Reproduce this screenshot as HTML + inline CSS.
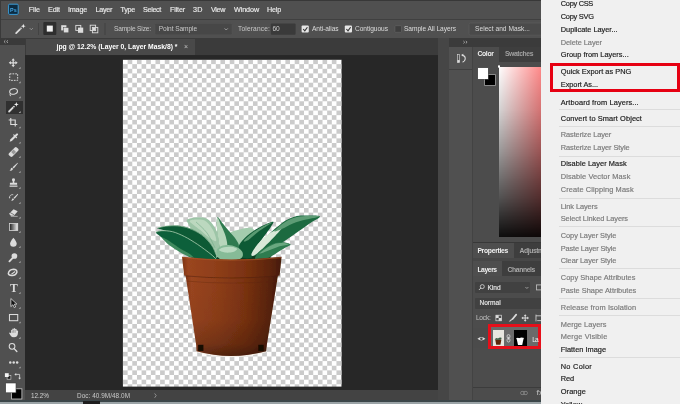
<!DOCTYPE html>
<html><head><meta charset="utf-8"><title>Photoshop</title>
<style>
html,body{margin:0;padding:0;background:#282828;}
#root{position:relative;width:680px;height:404px;overflow:hidden;background:#282828;font-family:"Liberation Sans",sans-serif;}
.t{position:absolute;white-space:nowrap;filter:blur(0.3px);}
.b{position:absolute;}
.sep{position:absolute;left:559px;width:121px;height:1px;background:#dcdcdc;}
svg{position:absolute;left:0;top:0;overflow:visible;}
.m{z-index:6}
.sep{z-index:6}
.menu{z-index:5}
.m{-webkit-text-stroke:0.18px currentColor}
.mb{-webkit-text-stroke:0.15px currentColor}
.ic{filter:blur(0.3px)}

</style></head>
<body>
<div id="root">
<!-- top bars -->
<div class="b" style="left:0;top:0;width:680px;height:19px;background:#505050"></div>
<div class="b" style="left:0;top:18.6px;width:680px;height:1px;background:#404040"></div>
<div class="b" style="left:0;top:19.6px;width:680px;height:18.7px;background:#505050"></div>
<div class="b" style="left:0;top:0;width:541px;height:0.8px;background:#383838"></div>
<div class="b" style="left:0;top:0;width:0.8px;height:404px;background:#3a3a3a"></div>
<!-- tab band -->
<div class="b" style="left:0;top:38.3px;width:680px;height:17.2px;background:#3b3b3b"></div>
<div class="b" style="left:25.6px;top:38.8px;width:169.4px;height:16.7px;background:#494949"></div>
<!-- canvas bg -->
<div class="b" style="left:24.5px;top:55.5px;width:413.2px;height:334.8px;background:#272727"></div>
<!-- status bar -->
<div class="b" style="left:24.5px;top:390.3px;width:413.2px;height:11px;background:#434343"></div>
<!-- left toolbar -->
<div class="b" style="left:0;top:38.3px;width:25.2px;height:365px;background:#505050"></div>
<div class="b" style="left:0;top:38.3px;width:25.2px;height:6.5px;background:#3a3a3a"></div>
<div class="b" style="left:6.2px;top:101.2px;width:16.4px;height:12.6px;background:#303030"></div>
<!-- right columns -->
<div class="b" style="left:437.7px;top:38.3px;width:11.5px;height:363px;background:#464646"></div>
<div class="b" style="left:449.2px;top:47px;width:23px;height:354px;background:#505050"></div>
<div class="b" style="left:449.2px;top:47px;width:23px;height:21.5px;background:#515151"></div>
<div class="b" style="left:449.2px;top:68.5px;width:23px;height:1px;background:#404040"></div>
<div class="b" style="left:471.5px;top:47px;width:1px;height:354px;background:#434343"></div>
<!-- color panel -->
<div class="b" style="left:472.5px;top:47px;width:70px;height:354px;background:#4c4c4c"></div>
<div class="b" style="left:499px;top:47px;width:43px;height:14.5px;background:#3e3e3e"></div>
<div class="b" style="left:484.5px;top:75px;width:10px;height:9.6px;background:#000;box-shadow:0 0 0 0.8px #9a9a9a"></div>
<div class="b" style="left:478.2px;top:68px;width:10.3px;height:10.6px;background:#fff;box-shadow:0 0 0 0.6px #555"></div>
<div class="b" style="left:499.2px;top:66.5px;width:84px;height:170.9px;background:linear-gradient(to bottom,rgba(0,0,0,0) 0%,rgba(0,0,0,0.17) 25%,rgba(0,0,0,0.40) 50%,rgba(0,0,0,0.68) 77%,rgba(0,0,0,0.95) 100%),linear-gradient(to right,#ffffff 0%,#ff1414 100%)"></div>
<div class="b" style="left:497.9px;top:65.2px;width:2.6px;height:2.6px;border-radius:50%;border:0.7px solid #fff;box-sizing:border-box;background:#ddd"></div>
<!-- properties tab row -->
<div class="b" style="left:472.5px;top:241.8px;width:70px;height:1.2px;background:#383838"></div>
<div class="b" style="left:472.5px;top:243px;width:70px;height:14.7px;background:#3e3e3e"></div>
<div class="b" style="left:472.5px;top:243px;width:41.5px;height:14.7px;background:#4e4e4e"></div>
<div class="b" style="left:472.5px;top:257.7px;width:70px;height:3.2px;background:#474747"></div>
<!-- layers tab row -->
<div class="b" style="left:472.5px;top:260.9px;width:70px;height:15.6px;background:#3e3e3e"></div>
<div class="b" style="left:472.5px;top:260.9px;width:29px;height:15.6px;background:#4e4e4e"></div>
<!-- kind / normal -->
<div class="b" style="left:474.8px;top:282.3px;width:55.6px;height:10.6px;background:#414141;border-radius:1px"></div>
<div class="b" style="left:474.8px;top:298.2px;width:70px;height:10.4px;background:#414141;border-radius:1px"></div>
<!-- layer row -->
<div class="b" style="left:472.5px;top:327.5px;width:70px;height:20px;background:#4b4b4b"></div>
<div class="b" style="left:488px;top:327px;width:54px;height:21px;background:#6a6a6a"></div>
<div class="b" style="left:492.5px;top:329.5px;width:11.5px;height:16.8px;background:#e8e6df"></div>
<div class="b" style="left:513.5px;top:329.5px;width:13px;height:16.8px;background:#000"></div>
<div class="b" style="left:487.6px;top:324.2px;width:53.9px;height:25.3px;border:3px solid #e60f1a;box-sizing:border-box"></div>
<!-- layers footer -->
<div class="b" style="left:472.5px;top:386.5px;width:70px;height:1px;background:#3c3c3c"></div>
<!-- bottom strip -->
<div class="b" style="left:0;top:400.2px;width:541px;height:4px;background:#3b4649"></div>
<div class="b" style="left:0;top:402.3px;width:541px;height:2px;background:#9aa3a6"></div>
<div class="b" style="left:83px;top:401px;width:17px;height:3px;background:#1e1e1e"></div>
<!-- context menu -->
<div class="b menu" style="left:541px;top:0;width:139px;height:404px;background:#f0f0f0"></div>
<div class="sep" style="top:108.9px"></div><div class="sep" style="top:125.9px"></div><div class="sep" style="top:155.8px"></div><div class="sep" style="top:197.5px"></div><div class="sep" style="top:226.2px"></div><div class="sep" style="top:268.4px"></div><div class="sep" style="top:298.4px"></div><div class="sep" style="top:315.1px"></div><div class="sep" style="top:356.7px"></div>
<div class="b" style="left:549.8px;top:62.8px;width:130.4px;height:29.4px;border:3.1px solid #e60012;box-sizing:border-box;z-index:7"></div>

<svg width="680" height="404" viewBox="0 0 680 404">
<defs>
<pattern id="chk" x="123" y="59.5" width="9.28" height="9.28" patternUnits="userSpaceOnUse">
<rect width="9.28" height="9.28" fill="#ffffff"/>
<rect x="4.64" y="0" width="4.64" height="4.64" fill="#cbcbcb"/>
<rect x="0" y="4.64" width="4.64" height="4.64" fill="#cbcbcb"/>
</pattern>
<linearGradient id="pot" x1="0" x2="1" y1="0" y2="0">
<stop offset="0" stop-color="#7c3312"/>
<stop offset="0.06" stop-color="#9a4520"/>
<stop offset="0.35" stop-color="#8e3e19"/>
<stop offset="0.65" stop-color="#7a3211"/>
<stop offset="0.9" stop-color="#5a240b"/>
<stop offset="1" stop-color="#451a06"/>
</linearGradient>
<linearGradient id="potv" x1="0" x2="0" y1="0" y2="1">
<stop offset="0" stop-color="#000" stop-opacity="0"/>
<stop offset="0.55" stop-color="#000" stop-opacity="0.05"/>
<stop offset="0.85" stop-color="#000" stop-opacity="0.2"/>
<stop offset="1" stop-color="#000" stop-opacity="0.42"/>
</linearGradient>
<filter id="soft" x="-5%" y="-5%" width="110%" height="110%"><feGaussianBlur stdDeviation="0.35"/></filter>
<filter id="soft2" x="-2%" y="-2%" width="104%" height="104%"><feGaussianBlur stdDeviation="0.6"/></filter>
</defs>
<rect x="122.9" y="59.8" width="218.7" height="326.8" fill="url(#chk)" filter="url(#soft2)"/>
<g id="plant" filter="url(#soft)">
<!-- leaves -->
<!--LEAVES-->
<path d="M196.0 252.0 C198.5 249.0 207.7 245.5 215.0 244.0 C222.3 242.5 232.2 242.3 240.0 243.0 C247.8 243.7 257.0 245.5 262.0 248.0 C267.0 250.5 273.7 255.7 270.0 258.0 C266.3 260.3 251.7 261.3 240.0 262.0 C228.3 262.7 207.3 263.7 200.0 262.0 C192.7 260.3 193.5 255.0 196.0 252.0Z" fill="#0b3d22" />
<path d="M229.4 234.1 C230.3 230.7 236.2 230.3 240.0 229.4 C243.7 228.4 249.3 227.1 251.9 228.3 C254.6 229.5 256.5 233.1 255.9 236.8 C255.2 240.4 251.5 247.8 247.9 250.0 C244.4 252.2 237.8 252.6 234.7 250.0 C231.6 247.4 228.5 237.6 229.4 234.1Z" fill="#a4ccae" />
<path d="M187.1 219.6 C188.4 218.5 193.0 217.6 196.3 217.4 C199.6 217.3 203.8 217.1 206.9 218.8 C210.0 220.4 212.8 224.1 214.8 227.5 C216.9 230.9 218.3 235.4 219.3 239.4 C220.4 243.4 221.5 248.2 220.9 251.3 C220.4 254.4 218.5 257.5 216.2 257.9 C213.8 258.4 209.8 256.6 206.9 254.0 C204.0 251.3 201.4 245.8 199.0 242.1 C196.5 238.3 194.1 234.5 192.4 231.5 C190.6 228.5 189.3 226.0 188.4 224.1 C187.5 222.1 185.7 220.7 187.1 219.6Z" fill="#9dc5a7" />
<path d="M189.7 220.9 C190.4 220.0 194.9 219.5 197.6 219.6 C200.4 219.6 203.6 219.6 206.1 221.4 C208.7 223.2 211.3 226.9 213.0 230.1 C214.7 233.4 216.7 239.4 216.2 240.7 C215.6 242.1 212.2 239.9 209.6 238.1 C206.9 236.3 202.9 232.4 200.3 230.1 C197.6 227.9 195.4 226.4 193.7 224.9 C191.9 223.3 189.0 221.8 189.7 220.9Z" fill="#bcd8bf" />
<path d="M196.3 222.2 C198.1 224.0 203.8 228.6 206.9 232.8 C210.0 237.0 213.5 244.9 214.8 247.4" fill="none" stroke="#6fa884" stroke-width="0.8" opacity="0.7" stroke-linecap="round"/>
<path d="M217.5 216.9 C218.5 216.5 220.8 221.1 222.8 223.5 C224.8 226.0 227.2 228.8 229.4 231.5 C231.6 234.1 234.5 236.8 236.0 239.4 C237.6 242.1 239.8 244.9 238.7 247.4 C237.6 249.8 232.4 253.5 229.4 254.0 C226.5 254.4 222.8 252.9 220.9 250.0 C219.1 247.1 219.0 240.7 218.3 236.8 C217.6 232.8 217.1 229.5 217.0 226.2 C216.8 222.9 216.5 217.4 217.5 216.9Z" fill="#2f7a50" />
<path d="M217.5 217.4 C218.2 217.2 219.7 222.1 220.9 224.9 C222.2 227.6 223.8 230.8 224.9 234.1 C226.0 237.4 227.2 241.6 227.3 244.7 C227.4 247.8 226.6 251.9 225.4 252.6 C224.3 253.4 221.6 252.1 220.4 249.5 C219.2 246.8 218.6 240.6 218.0 236.8 C217.4 232.9 216.8 229.4 216.7 226.2 C216.6 223.0 216.8 217.7 217.5 217.4Z" fill="#b7d6bb" />
<path d="M157.4 228.3 C157.9 227.6 162.5 226.4 165.9 225.9 C169.3 225.5 173.8 225.2 177.8 225.6 C181.8 226.0 185.7 226.8 189.7 228.3 C193.7 229.8 198.0 231.9 201.6 234.6 C205.2 237.4 209.0 241.3 211.4 244.7 C213.8 248.1 215.8 252.9 216.2 255.3 C216.5 257.7 215.7 260.1 213.5 259.3 C211.3 258.4 206.9 253.1 202.9 250.0 C199.0 246.9 194.3 243.5 189.7 240.7 C185.1 238.0 179.6 235.4 175.1 233.6 C170.7 231.8 166.2 231.0 163.2 230.1 C160.3 229.3 157.0 229.0 157.4 228.3Z" fill="#0f5a35" />
<path d="M157.9 228.0 C159.3 227.7 162.6 226.5 165.9 226.2 C169.2 225.8 173.8 225.5 177.8 225.9 C181.8 226.3 185.7 227.1 189.7 228.6 C193.7 230.1 198.0 232.2 201.6 234.9 C205.2 237.6 209.0 241.7 211.4 245.0 C213.8 248.3 215.4 253.1 216.2 254.8" fill="none" stroke="#9fc7a6" stroke-width="0.7" opacity="0.9" stroke-linecap="round"/>
<path d="M155.8 232.3 C156.1 231.3 159.1 230.5 161.9 230.4 C164.7 230.3 168.7 230.5 172.5 231.5 C176.2 232.4 180.2 234.1 184.4 236.2 C188.6 238.4 193.2 241.2 197.6 244.2 C202.1 247.1 207.8 251.5 210.9 254.0 C214.0 256.5 219.3 258.6 216.2 259.3 C213.1 259.9 197.4 258.8 192.4 257.9 C187.3 257.1 188.4 255.5 185.7 254.0 C183.1 252.4 179.6 250.7 176.5 248.7 C173.4 246.7 169.9 244.1 167.2 242.1 C164.5 240.0 162.0 237.9 160.1 236.2 C158.2 234.6 155.5 233.2 155.8 232.3Z" fill="#10603a" />
<path d="M161.9 237.3 C162.4 237.0 166.8 239.6 169.9 241.5 C172.9 243.4 177.1 246.6 180.4 248.7 C183.7 250.7 187.5 252.4 189.7 254.0 C191.9 255.5 194.3 257.7 193.7 257.9 C193.0 258.2 188.6 256.6 185.7 255.3 C182.9 254.0 179.6 252.0 176.5 250.0 C173.4 248.0 169.6 245.5 167.2 243.4 C164.8 241.3 161.5 237.6 161.9 237.3Z" fill="#3f8a5e" />
<path d="M156.4 232.0 C157.3 231.8 159.2 230.7 161.9 230.7 C164.6 230.6 168.7 230.8 172.5 231.7 C176.2 232.7 180.2 234.4 184.4 236.5 C188.6 238.6 193.2 241.5 197.6 244.4 C202.1 247.4 207.9 251.9 210.9 254.2 C213.9 256.6 214.8 258.0 215.6 258.7" fill="none" stroke="#b5d6b9" stroke-width="0.8" opacity="0.95" stroke-linecap="round"/>
<path d="M273.3 221.8 C272.5 221.1 268.1 223.2 264.7 224.8 C261.3 226.4 256.5 228.9 252.8 231.5 C249.1 234.1 244.9 237.6 242.4 240.4 C240.0 243.2 238.5 245.3 238.3 248.1 C238.0 250.9 238.8 255.4 240.9 257.0 C243.1 258.6 249.1 258.9 251.3 257.8 C253.6 256.6 252.6 252.9 254.3 249.9 C256.0 246.8 259.2 243.0 261.7 239.5 C264.3 236.0 267.5 232.0 269.5 229.1 C271.4 226.1 274.1 222.5 273.3 221.8Z" fill="#115a36" />
<path d="M272.1 222.6 C271.9 222.4 267.8 223.8 264.7 225.4 C261.6 227.0 257.0 229.5 253.6 232.1 C250.1 234.6 244.8 239.4 243.9 240.7 C243.0 242.0 246.1 241.3 248.4 239.9 C250.6 238.6 254.3 234.7 257.3 232.5 C260.2 230.3 263.7 228.2 266.2 226.6 C268.7 224.9 272.4 222.8 272.1 222.6Z" fill="#5a9a72" />
<path d="M319.9 216.4 C319.5 215.3 312.7 215.6 308.8 215.6 C305.0 215.5 300.4 215.5 296.9 216.1 C293.4 216.8 290.5 218.1 287.6 219.6 C284.8 221.0 282.6 222.6 279.7 224.9 C276.8 227.1 273.5 229.7 270.4 232.8 C267.3 235.9 264.3 239.6 261.2 243.4 C258.1 247.1 251.9 253.5 251.9 255.3 C251.9 257.1 257.9 255.1 261.2 254.0 C264.5 252.9 267.8 250.9 271.8 248.7 C275.7 246.5 280.6 243.6 285.0 240.7 C289.4 237.9 293.8 234.6 298.2 231.5 C302.6 228.4 307.8 224.7 311.5 222.2 C315.1 219.7 320.4 217.5 319.9 216.4Z" fill="#1b6a40" />
<path d="M276.5 229.4 C279.2 228.0 282.7 226.3 282.3 227.5 C282.0 228.7 277.5 233.5 274.4 236.8 C271.3 240.1 267.1 244.3 263.8 247.4 C260.5 250.4 256.6 254.1 254.6 255.3 C252.5 256.4 250.9 256.0 251.4 254.2 C251.8 252.5 254.7 247.8 257.2 244.7 C259.7 241.6 263.2 238.0 266.5 235.4 C269.7 232.9 273.9 230.7 276.5 229.4Z" fill="#d9e8d8" />
<path d="M319.4 216.4 C319.8 215.8 312.6 216.0 308.8 216.1 C305.1 216.2 300.4 216.2 296.9 216.9 C293.4 217.6 290.4 218.9 287.6 220.4 C284.9 221.8 282.4 223.8 280.2 225.6 C278.0 227.5 274.1 230.9 274.4 231.5 C274.8 232.0 279.3 230.1 282.3 228.8 C285.4 227.5 289.0 225.1 292.9 223.5 C296.9 222.0 301.8 220.7 306.2 219.6 C310.6 218.4 319.0 217.0 319.4 216.4Z" fill="#5d9c74" />
<path d="M290.5 244.4 C290.1 243.5 285.3 242.5 282.5 242.3 C279.7 242.2 276.6 242.6 273.6 243.5 C270.6 244.4 267.4 246.2 264.7 248.0 C262.0 249.7 258.8 252.0 257.3 253.9 C255.8 255.8 254.1 258.5 255.8 259.2 C257.5 260.0 264.2 259.3 267.7 258.2 C271.1 257.1 273.6 254.6 276.6 252.9 C279.6 251.1 283.2 248.9 285.5 247.5 C287.8 246.1 291.0 245.3 290.5 244.4Z" fill="#2f7b50" />
<path d="M288.5 244.4 C289.0 243.8 285.0 243.1 282.5 243.1 C280.1 243.0 276.8 243.3 273.9 244.2 C271.1 245.2 267.8 247.1 265.4 248.7 C263.0 250.3 258.9 253.5 259.5 253.7 C260.1 254.0 265.8 251.6 269.2 250.3 C272.5 249.1 276.3 247.3 279.6 246.3 C282.8 245.3 288.0 244.9 288.5 244.4Z" fill="#6aa880" />
<path d="M216.8 250.0 C217.5 248.3 219.3 246.8 221.5 246.0 C223.7 245.2 227.2 244.9 230.0 245.2 C232.8 245.5 235.9 246.6 238.0 247.8 C240.1 249.0 242.0 250.8 242.6 252.5 C243.2 254.2 243.1 256.7 241.5 258.0 C239.9 259.3 236.2 260.2 233.0 260.5 C229.8 260.8 224.6 260.6 222.0 259.8 C219.4 259.1 218.1 257.6 217.2 256.0 C216.3 254.4 216.1 251.7 216.8 250.0Z" fill="#86bb97" />
<path d="M219.0 250.0 C218.8 249.1 222.0 247.7 224.0 247.2 C226.0 246.7 228.8 246.5 231.0 246.8 C233.2 247.1 236.7 248.1 237.0 249.0 C237.3 249.9 235.0 251.4 233.0 252.0 C231.0 252.6 227.3 252.8 225.0 252.5 C222.7 252.2 219.2 250.9 219.0 250.0Z" fill="#b9d9c0" />
<!--/LEAVES-->
<!-- pot body -->
<path d="M196.6 351.6 Q231 361.4 266.2 351.6" stroke="#f6f1ea" stroke-width="1.6" fill="none" opacity=".9"/>
<path d="M185.5 275 L278 275 L266.8 345 L266.2 351.2 Q231 360.6 196.6 351.2 L196.2 345 Z" fill="url(#pot)"/>
<path d="M185.5 275 L278 275 L266.8 345 L266.2 351.2 Q231 360.6 196.6 351.2 L196.2 345 Z" fill="url(#potv)"/>
<!-- rim -->
<path d="M182 256.8 Q231 262 281.6 256.8 L279.6 275.6 Q231 280 184.2 275.6 Z" fill="url(#pot)"/>
<path d="M182.3 257.6 Q231 262.8 281.3 257.6" stroke="#b05c30" stroke-width="1" fill="none" opacity=".6"/>
<path d="M184.2 275.8 Q231 280.2 279.6 275.8" stroke="#4e1e07" stroke-width="1" fill="none" opacity=".5"/>
<path d="M185 281 Q231 285.2 278.6 281" stroke="#5a2409" stroke-width="0.8" fill="none" opacity=".4"/>
<!-- feet -->
<rect x="198.2" y="344.8" width="5.2" height="6.2" fill="#150803"/>
<rect x="258.4" y="344.8" width="5.2" height="6.2" fill="#150803"/>
</g>
</svg>
<svg class="ic" width="680" height="404" viewBox="0 0 680 404">
<rect x="8.6" y="4.2" width="9.6" height="10.2" rx="1" fill="#0c2c42" stroke="#3a9bd6" stroke-width="1"/>
<text x="10.1" y="11.6" font-family="Liberation Sans, sans-serif" font-size="5.4" font-weight="700" fill="#45a6e4">Ps</text>
<g transform="translate(13.2,62.8) scale(0.86)" ><path d="M0 -5.2 L2 -2.6 L0.7 -2.6 L0.7 -0.7 L2.6 -0.7 L2.6 -2 L5.2 0 L2.6 2 L2.6 0.7 L0.7 0.7 L0.7 2.6 L2 2.6 L0 5.2 L-2 2.6 L-0.7 2.6 L-0.7 0.7 L-2.6 0.7 L-2.6 2 L-5.2 0 L-2.6 -2 L-2.6 -0.7 L-0.7 -0.7 L-0.7 -2.6 L-2 -2.6 Z" fill="#dcdcdc"/></g>
<path d="M20.6 66.9 l0 1.9 l-1.9 0 z" fill="#b0b0b0"/>
<g transform="translate(13.7,77.1) scale(0.86)" ><rect x="-4.6" y="-3.8" width="9.2" height="7.6" fill="none" stroke="#dcdcdc" stroke-width="1.1" stroke-dasharray="2 1.2"/></g>
<path d="M20.6 81.30000000000001 l0 1.9 l-1.9 0 z" fill="#b0b0b0"/>
<g transform="translate(13.4,92.2) scale(0.86)" ><ellipse cx="0.4" cy="-0.8" rx="4.6" ry="3.2" fill="none" stroke="#dcdcdc" stroke-width="1.2" transform="rotate(-12)"/><path d="M-3.4 1.2 Q-4.6 3 -3.2 4.6" fill="none" stroke="#dcdcdc" stroke-width="1.1"/></g>
<path d="M20.6 96.30000000000001 l0 1.9 l-1.9 0 z" fill="#b0b0b0"/>
<g transform="translate(13.4,107.2) scale(0.86)" ><path d="M-5 5 L0.6 -0.6" stroke="#dcdcdc" stroke-width="2.1" stroke-linecap="round"/><path d="M-0.9 -0.9 L0.9 0.9" stroke="#303030" stroke-width="0.7"/><path d="M3.4 -6 L4.1 -3.9 L6.2 -3.2 L4.1 -2.5 L3.4 -0.4 L2.7 -2.5 L0.6 -3.2 L2.7 -3.9 Z" fill="#f4f4f4"/></g>
<path d="M20.6 111.10000000000001 l0 1.9 l-1.9 0 z" fill="#b0b0b0"/>
<g transform="translate(13,122.3) scale(0.86)" ><path d="M-2.6 -5 L-2.6 2.6 L5 2.6 M-5 -2.6 L2.6 -2.6 L2.6 5" fill="none" stroke="#dcdcdc" stroke-width="1.3"/></g>
<path d="M20.6 126.4 l0 1.9 l-1.9 0 z" fill="#b0b0b0"/>
<g transform="translate(13.6,137.8) scale(0.86)" ><path d="M-4.6 4.6 L-3.8 2 L0.6 -2.4 L2.4 -0.6 L-2 3.8 Z" fill="#dcdcdc"/><path d="M0.2 -3.4 L3.4 -0.2" stroke="#dcdcdc" stroke-width="1.4" stroke-linecap="round"/><path d="M1.8 -1.8 L4 -4" stroke="#dcdcdc" stroke-width="2.4" stroke-linecap="round"/></g>
<path d="M20.6 141.70000000000002 l0 1.9 l-1.9 0 z" fill="#b0b0b0"/>
<g transform="translate(13.6,152) scale(0.86)" ><rect x="-6.4" y="-2.8" width="12.8" height="5.6" rx="1.6" fill="#dcdcdc" transform="rotate(-45)"/><rect x="-2" y="-2" width="4" height="4" fill="#555" transform="rotate(-45)" opacity=".5"/></g>
<path d="M20.6 155.9 l0 1.9 l-1.9 0 z" fill="#b0b0b0"/>
<g transform="translate(13.6,167) scale(0.86)" ><path d="M4.6 -4.8 L5 -4.4 L0.2 1.6 L-1.2 0.2 Z" fill="#dcdcdc"/><path d="M-1.8 0.9 L-0.5 2.2 Q-1.6 4.6 -4.8 4.6 Q-3.2 3.2 -3.4 2.2 Q-3.2 1 -1.8 0.9Z" fill="#dcdcdc"/></g>
<path d="M20.6 170.9 l0 1.9 l-1.9 0 z" fill="#b0b0b0"/>
<g transform="translate(13.5,182.8) scale(0.86)" ><path d="M-1.6 -4.8 Q0 -5.6 1.6 -4.8 Q2.2 -3.2 0.9 -1.6 L0.9 0 L4.2 0 L4.2 2.2 L-4.2 2.2 L-4.2 0 L-0.9 0 L-0.9 -1.6 Q-2.2 -3.2 -1.6 -4.8Z" fill="#dcdcdc"/><rect x="-4.6" y="3.2" width="9.2" height="1.4" fill="#dcdcdc"/></g>
<path d="M20.6 186.9 l0 1.9 l-1.9 0 z" fill="#b0b0b0"/>
<g transform="translate(13.6,198) scale(0.86)" ><path d="M4.8 -4.8 L5.2 -4.2 L1.2 0.8 L0 -0.4 Z" fill="#dcdcdc"/><path d="M-0.6 0.2 L0.6 1.4 Q-0.4 3.4 -3 3.4 Q-1.8 2.4 -2 1.6 Q-1.8 0.4 -0.6 0.2Z" fill="#dcdcdc"/><path d="M-4.8 -0.6 A3.4 3.4 0 0 1 -0.4 -3.8" fill="none" stroke="#dcdcdc" stroke-width="0.9"/><path d="M-5.6 -1.2 L-3.8 -0.8 L-4.4 0.8Z" fill="#dcdcdc"/></g>
<path d="M20.6 201.9 l0 1.9 l-1.9 0 z" fill="#b0b0b0"/>
<g transform="translate(13.4,212.6) scale(0.86)" ><path d="M-5 1.2 L0.2 -4 L5 -1.6 L0.6 3.6 L-3 3.6 Z" fill="#dcdcdc"/><path d="M-3.8 0 L1 2.6" stroke="#4d4d4d" stroke-width="0.8"/><path d="M-3 4.4 L5 4.4" stroke="#dcdcdc" stroke-width="0.7"/></g>
<path d="M20.6 216.70000000000002 l0 1.9 l-1.9 0 z" fill="#b0b0b0"/>
<defs><linearGradient id="gr" x1="0" x2="1"><stop offset="0" stop-color="#1c1c1c"/><stop offset="1" stop-color="#f4f4f4"/></linearGradient></defs>
<g transform="translate(13.6,227) scale(0.86)" ><rect x="-4.8" y="-4" width="9.6" height="8" fill="url(#gr)" stroke="#dcdcdc" stroke-width="0.9"/></g>
<path d="M20.6 230.9 l0 1.9 l-1.9 0 z" fill="#b0b0b0"/>
<g transform="translate(13.4,242) scale(0.86)" ><path d="M0 -5 Q3.8 -0.4 3.8 1.6 A3.8 3.8 0 0 1 -3.8 1.6 Q-3.8 -0.4 0 -5Z" fill="#dcdcdc"/></g>
<path d="M20.6 245.9 l0 1.9 l-1.9 0 z" fill="#b0b0b0"/>
<g transform="translate(13.2,257.4) scale(0.86)" ><circle cx="1.4" cy="-1.6" r="3.3" fill="#dcdcdc"/><path d="M-0.8 0.8 L-4.4 4.6" stroke="#dcdcdc" stroke-width="2.1" stroke-linecap="round"/></g>
<path d="M20.6 260.9 l0 1.9 l-1.9 0 z" fill="#b0b0b0"/>
<g transform="translate(12.6,272.6) scale(0.86)" ><path d="M-5 1 Q-4 -3.4 1 -3.8 Q5.4 -3.6 5 -0.4 Q4 3 -0.6 3.4 Q-4.6 3.6 -5 1Z" fill="none" stroke="#dcdcdc" stroke-width="1.7"/><path d="M-2 1.6 L2.6 -1.8 L3.4 -0.6 L-0.8 2.2Z" fill="#dcdcdc"/></g>
<path d="M20.6 276.9 l0 1.9 l-1.9 0 z" fill="#b0b0b0"/>
<text x="10.1" y="291.8" font-family="Liberation Serif, serif" font-size="11.6" font-weight="700" fill="#dcdcdc">T</text>
<path d="M20.6 291.9 l0 1.9 l-1.9 0 z" fill="#b0b0b0"/>
<g transform="translate(13.6,303) scale(0.86)" ><path d="M-3.2 -5.2 L-3.2 4.2 L-0.8 2 L0.8 5.4 L2.4 4.6 L0.9 1.4 L3.8 1.2 Z" fill="#141414" stroke="#e2e2e2" stroke-width="0.9" stroke-linejoin="round"/></g>
<path d="M20.6 306.9 l0 1.9 l-1.9 0 z" fill="#b0b0b0"/>
<g transform="translate(13.6,317.6) scale(0.86)" ><rect x="-4.8" y="-3.6" width="9.6" height="7.2" fill="none" stroke="#dcdcdc" stroke-width="1.2"/></g>
<path d="M20.6 321.4 l0 1.9 l-1.9 0 z" fill="#b0b0b0"/>
<g transform="translate(14,332.8) scale(0.86)" ><path d="M-3.4 0.6 L-3.4 -3 Q-2.7 -4.2 -2 -3 L-2 -4.4 Q-1.2 -5.8 -0.4 -4.4 L-0.4 -4.8 Q0.5 -6.2 1.3 -4.8 L1.3 -4 Q2.2 -5.2 3 -4 L3.2 -2.4 Q4.4 -3.4 4.8 -2 L4.4 1.8 Q3.8 5.2 0 5.2 Q-2.8 5.2 -4 3 L-5.8 0.2 Q-4.8 -1.2 -3.4 0.6Z" fill="#dcdcdc"/><path d="M-2 -2.6 L-2 0 M-0.4 -3.6 L-0.4 0 M1.3 -3.4 L1.3 0" stroke="#505050" stroke-width="0.5"/></g>
<path d="M20.6 336.9 l0 1.9 l-1.9 0 z" fill="#b0b0b0"/>
<g transform="translate(12.9,347.4) scale(0.86)" ><circle cx="-1" cy="-1.2" r="3.3" fill="none" stroke="#dcdcdc" stroke-width="1.2"/><path d="M1.4 1.4 L4.6 4.8" stroke="#dcdcdc" stroke-width="1.6" stroke-linecap="round"/></g>
<g transform="translate(13.7,362.6) scale(0.86)" ><circle cx="-4" cy="0" r="1.45" fill="#dcdcdc"/><circle cx="0" cy="0" r="1.45" fill="#dcdcdc"/><circle cx="4" cy="0" r="1.45" fill="#dcdcdc"/></g>
<path d="M20.6 366.4 l0 1.9 l-1.9 0 z" fill="#b0b0b0"/>
<g transform="translate(7.7,376) scale(1.0)" ><rect x="-0.6" y="-0.6" width="3.8" height="3.8" fill="#222" stroke="#dcdcdc" stroke-width="0.6"/><rect x="-2.8" y="-2.8" width="3.8" height="3.8" fill="#f4f4f4"/></g>
<g transform="translate(18,376) scale(1.0)" ><path d="M-2.6 -1.6 L1.6 -1.6 L1.6 2.6" fill="none" stroke="#dcdcdc" stroke-width="0.8"/><path d="M-3.6 -1.6 L-1.8 -3 L-1.8 -0.2Z M1.6 3.6 L0.2 1.8 L3 1.8Z" fill="#dcdcdc"/></g>
<rect x="11.6" y="388.8" width="10.3" height="10.2" fill="#000" stroke="#c8c8c8" stroke-width="0.8"/>
<rect x="5.7" y="383" width="10.3" height="9.8" fill="#fff" stroke="#3a3a3a" stroke-width="0.6"/>
<path d="M5.4 40.3 l-1.4 1.3 l1.4 1.3 M8 40.3 l-1.4 1.3 l1.4 1.3" fill="none" stroke="#c8c8c8" stroke-width="0.7"/>
<path d="M463.4 41 l1.3 1.2 l-1.3 1.2 M465.8 41 l1.3 1.2 l-1.3 1.2" fill="none" stroke="#c8c8c8" stroke-width="0.7"/>
<g transform="translate(20.4,28.9) scale(0.85)" ><path d="M-5 5 L0.6 -0.6" stroke="#dcdcdc" stroke-width="2.1" stroke-linecap="round"/><path d="M-0.9 -0.9 L0.9 0.9" stroke="#4b4b4b" stroke-width="0.7"/><path d="M3.4 -6 L4.1 -3.9 L6.2 -3.2 L4.1 -2.5 L3.4 -0.4 L2.7 -2.5 L0.6 -3.2 L2.7 -3.9 Z" fill="#f4f4f4"/></g>
<path d="M29.8 28.2 l1.5 1.5 l1.5 -1.5" fill="none" stroke="#a8a8a8" stroke-width="0.8"/>
<rect x="38.2" y="23" width="0.8" height="12" fill="#404040"/>
<rect x="43.3" y="22.1" width="13" height="12.9" rx="1" fill="#2e2e2e"/>
<rect x="46.8" y="25.6" width="6" height="6" fill="#f0f0f0"/>
<g transform="translate(65,29) scale(1.0)" ><rect x="-3.8" y="-3.8" width="5.2" height="5.2" fill="#dcdcdc"/><rect x="-1.4" y="-1.4" width="5.2" height="5.2" fill="#dcdcdc" stroke="#4b4b4b" stroke-width="0.5"/></g>
<g transform="translate(79.4,29) scale(1.0)" ><rect x="-3.6" y="-3.6" width="5" height="5" fill="none" stroke="#dcdcdc" stroke-width="0.9"/><rect x="-1.4" y="-1.4" width="5.2" height="5.2" fill="#dcdcdc"/></g>
<g transform="translate(94,29) scale(1.0)" ><rect x="-3.8" y="-3.8" width="5.4" height="5.4" fill="none" stroke="#dcdcdc" stroke-width="0.9"/><rect x="-1.6" y="-1.6" width="5.4" height="5.4" fill="none" stroke="#dcdcdc" stroke-width="0.9"/><rect x="-1.2" y="-1.2" width="2.4" height="2.4" fill="#dcdcdc"/></g>
<rect x="104.6" y="23" width="0.8" height="12" fill="#3c3c3c"/>
<rect x="155" y="23.4" width="77" height="11.4" rx="1" fill="#474747" stroke="#585858" stroke-width="0.4"/>
<path d="M224.6 28.4 l1.6 1.6 l1.6 -1.6" fill="none" stroke="#b0b0b0" stroke-width="0.8"/>
<rect x="270.8" y="23.4" width="24.8" height="11.4" rx="1" fill="#3a3a3a"/>
<rect x="301.6" y="25.4" width="7.2" height="7.2" rx="1" fill="#e6e6e6"/><path d="M303.20000000000005 29.0 l1.6 1.8 l2.6 -3.6" fill="none" stroke="#333" stroke-width="1.1"/>
<rect x="344.8" y="25.4" width="7.2" height="7.2" rx="1" fill="#e6e6e6"/><path d="M346.40000000000003 29.0 l1.6 1.8 l2.6 -3.6" fill="none" stroke="#333" stroke-width="1.1"/>
<rect x="394.90000000000003" y="25.7" width="6.6" height="6.6" rx="0.8" fill="#3e3e3e" stroke="#666" stroke-width="0.6"/>
<rect x="469" y="23" width="80" height="12.2" rx="1.5" fill="#4a4a4a" stroke="#5e5e5e" stroke-width="0.6"/>
<g transform="translate(461,58.5) scale(1.0)" ><rect x="-3.6" y="-4" width="2.2" height="8" fill="none" stroke="#dcdcdc" stroke-width="0.6"/><rect x="-3.6" y="1.6" width="2.2" height="2.4" fill="#dcdcdc"/><path d="M1.2 -3.4 Q4.6 -2.6 4.2 0.6 Q3.8 3 1.6 3.6" fill="none" stroke="#dcdcdc" stroke-width="1.1"/><path d="M0 -3.6 L2.4 -4.8 L2.2 -2Z" fill="#dcdcdc"/></g>
<g transform="translate(481.5,287.4) scale(1.0)" ><circle cx="0.8" cy="-0.8" r="2" fill="none" stroke="#dcdcdc" stroke-width="0.8"/><path d="M-0.6 0.6 L-2.6 2.6" stroke="#dcdcdc" stroke-width="0.9"/></g>
<path d="M525.4 287 l1.5 1.5 l1.5 -1.5" fill="none" stroke="#b0b0b0" stroke-width="0.8"/>
<g transform="translate(539.5,287.5) scale(1.0)" ><rect x="-3" y="-2.6" width="6" height="5" fill="none" stroke="#b8b8b8" stroke-width="0.9"/></g>
<g transform="translate(498.7,318) scale(1.0)" ><rect x="-2.8" y="-2.8" width="5.6" height="5.6" fill="none" stroke="#dcdcdc" stroke-width="0.7"/><rect x="-2.8" y="-2.8" width="2.8" height="2.8" fill="#dcdcdc"/><rect x="0" y="0" width="2.8" height="2.8" fill="#dcdcdc"/></g>
<g transform="translate(512.8,318.2) scale(1.0)" ><path d="M3.4 -3.6 L-0.2 0.8" stroke="#dcdcdc" stroke-width="1.7" stroke-linecap="round"/><path d="M-0.6 0.6 Q-1.2 3 -3.4 3.2 Q-2.2 1.2 -0.6 0.6Z" fill="#dcdcdc" stroke="#dcdcdc" stroke-width="0.5"/></g>
<g transform="translate(525.2,318) scale(1.0)" ><path d="M0 -3.8 L1.4 -2 L0.5 -2 L0.5 -0.5 L2 -0.5 L2 -1.4 L3.8 0 L2 1.4 L2 0.5 L0.5 0.5 L0.5 2 L1.4 2 L0 3.8 L-1.4 2 L-0.5 2 L-0.5 0.5 L-2 0.5 L-2 1.4 L-3.8 0 L-2 -1.4 L-2 -0.5 L-0.5 -0.5 L-0.5 -2 L-1.4 -2 Z" fill="#dcdcdc"/></g>
<g transform="translate(538.6,318) scale(1.0)" ><path d="M-2.6 -2.2 L3 -2.2 L3 2.6 L-1.4 2.6 M-2.6 -3.4 L-2.6 3.4" fill="none" stroke="#dcdcdc" stroke-width="0.8"/></g>
<g transform="translate(481.4,338.8) scale(1.0)" ><path d="M-4 0 Q0 -3.6 4 0 Q0 3.6 -4 0Z" fill="#dcdcdc"/><circle cx="0" cy="0" r="1.3" fill="#4b4b4b"/></g>
<g transform="translate(508.5,338.2) scale(1.0)" ><rect x="-1.4" y="-3.6" width="2.8" height="3.6" rx="1.3" fill="none" stroke="#e8e8e8" stroke-width="0.7"/><rect x="-1.4" y="0.2" width="2.8" height="3.6" rx="1.3" fill="none" stroke="#e8e8e8" stroke-width="0.7"/><path d="M0 -1.4 L0 1.6" stroke="#e8e8e8" stroke-width="0.7"/></g>
<path d="M495.2 339.4 L501.4 339.4 L500.4 344.8 L496.2 344.8 Z" fill="#5e260c"/><path d="M494.6 339.6 Q496 337 498 338.4 Q500 336.8 502 338 Q501 338.8 500.6 339.8 L496 339.8 Q495.4 339.2 494.6 339.6Z" fill="#3a5e44"/>
<path d="M516.6 338.6 L523.6 338.6 L522.2 345 L518 345 Z" fill="#fff"/><path d="M516 339 Q517.4 337 519.2 338.2 Q521.4 336.8 524.2 338 Q523.2 338.6 522.8 339.4 L517.6 339.4 Q516.8 338.8 516 339Z" fill="#fff"/>
<g transform="translate(524,393) scale(1.0)" ><rect x="-3.4" y="-1.6" width="3.8" height="3.2" rx="1.4" fill="none" stroke="#8a8a8a" stroke-width="0.8"/><rect x="-0.4" y="-1.6" width="3.8" height="3.2" rx="1.4" fill="none" stroke="#8a8a8a" stroke-width="0.8"/></g>
<path d="M154.6 393.4 l1.6 2.2 l-1.6 2.2" fill="none" stroke="#a0a0a0" stroke-width="0.8"/>
</svg>

<span id="t0" class="t mb" style="left:28.75px;top:3.50px;font-size:7.2px;color:#ebebeb;font-weight:400;line-height:12px;letter-spacing:-0.086px;">File</span>
<span id="t1" class="t mb" style="left:48px;top:3.50px;font-size:7.2px;color:#ebebeb;font-weight:400;line-height:12px;letter-spacing:-0.098px;">Edit</span>
<span id="t2" class="t mb" style="left:68px;top:3.50px;font-size:7.2px;color:#ebebeb;font-weight:400;line-height:12px;letter-spacing:-0.197px;">Image</span>
<span id="t3" class="t mb" style="left:95.5px;top:3.50px;font-size:7.2px;color:#ebebeb;font-weight:400;line-height:12px;letter-spacing:-0.297px;">Layer</span>
<span id="t4" class="t mb" style="left:120.5px;top:3.50px;font-size:7.2px;color:#ebebeb;font-weight:400;line-height:12px;letter-spacing:-0.273px;">Type</span>
<span id="t5" class="t mb" style="left:143px;top:3.50px;font-size:7.2px;color:#ebebeb;font-weight:400;line-height:12px;letter-spacing:-0.331px;">Select</span>
<span id="t6" class="t mb" style="left:170px;top:3.50px;font-size:7.2px;color:#ebebeb;font-weight:400;line-height:12px;letter-spacing:-0.164px;">Filter</span>
<span id="t7" class="t mb" style="left:193px;top:3.50px;font-size:7.2px;color:#ebebeb;font-weight:400;line-height:12px;letter-spacing:0.148px;">3D</span>
<span id="t8" class="t mb" style="left:211px;top:3.50px;font-size:7.2px;color:#ebebeb;font-weight:400;line-height:12px;letter-spacing:-0.363px;">View</span>
<span id="t9" class="t mb" style="left:234px;top:3.50px;font-size:7.2px;color:#ebebeb;font-weight:400;line-height:12px;letter-spacing:-0.096px;">Window</span>
<span id="t10" class="t mb" style="left:267px;top:3.50px;font-size:7.2px;color:#ebebeb;font-weight:400;line-height:12px;letter-spacing:-0.199px;">Help</span>
<span id="t11" class="t " style="left:114px;top:23.00px;font-size:6.6px;color:#c8c8c8;font-weight:400;line-height:12px;letter-spacing:-0.155px;">Sample Size:</span>
<span id="t12" class="t " style="left:158.8px;top:23.00px;font-size:6.6px;color:#c8c8c8;font-weight:400;line-height:12px;letter-spacing:-0.085px;">Point Sample</span>
<span id="t13" class="t " style="left:238px;top:23.00px;font-size:6.6px;color:#c8c8c8;font-weight:400;line-height:12px;letter-spacing:0.158px;">Tolerance:</span>
<span id="t14" class="t " style="left:272.6px;top:23.00px;font-size:6.6px;color:#d0d0d0;font-weight:400;line-height:12px;letter-spacing:-0.272px;">60</span>
<span id="t15" class="t " style="left:312px;top:23.00px;font-size:6.6px;color:#dcdcdc;font-weight:400;line-height:12px;letter-spacing:-0.062px;">Anti-alias</span>
<span id="t16" class="t " style="left:355px;top:23.00px;font-size:6.6px;color:#dcdcdc;font-weight:400;line-height:12px;letter-spacing:-0.036px;">Contiguous</span>
<span id="t17" class="t " style="left:404px;top:23.00px;font-size:6.6px;color:#dcdcdc;font-weight:400;line-height:12px;letter-spacing:-0.046px;">Sample All Layers</span>
<span id="t18" class="t " style="left:475px;top:23.00px;font-size:6.6px;color:#dcdcdc;font-weight:400;line-height:12px;letter-spacing:0.042px;">Select and Mask...</span>
<span id="t19" class="t " style="left:56.5px;top:41.00px;font-size:6.8px;color:#ffffff;font-weight:700;line-height:12px;letter-spacing:-0.003px;">jpg @ 12.2% (Layer 0, Layer Mask/8) *</span>
<span id="t20" class="t " style="left:184px;top:40.80px;font-size:7px;color:#c0c0c0;font-weight:400;line-height:12px;letter-spacing:-0.094px;">×</span>
<span id="t21" class="t " style="left:31px;top:389.70px;font-size:6.4px;color:#d0d0d0;font-weight:400;line-height:12px;letter-spacing:-0.025px;">12.2%</span>
<span id="t22" class="t " style="left:77px;top:389.70px;font-size:6.4px;color:#c8c8c8;font-weight:400;line-height:12px;letter-spacing:0.049px;">Doc: 40.9M/48.0M</span>
<span id="t23" class="t " style="left:477.4px;top:47.80px;font-size:6.8px;color:#f0f0f0;font-weight:700;line-height:12px;letter-spacing:-0.290px;">Color</span>
<span id="t24" class="t " style="left:505px;top:47.80px;font-size:6.8px;color:#a0a0a0;font-weight:700;line-height:12px;letter-spacing:-0.420px;">Swatches</span>
<span id="t25" class="t " style="left:477.4px;top:245.00px;font-size:6.8px;color:#f0f0f0;font-weight:700;line-height:12px;letter-spacing:-0.302px;">Properties</span>
<span id="t26" class="t " style="left:519.5px;top:245.00px;font-size:6.8px;color:#a8a8a8;font-weight:700;line-height:12px;letter-spacing:-0.425px;">Adjustments</span>
<span id="t27" class="t " style="left:477.4px;top:263.70px;font-size:6.8px;color:#f0f0f0;font-weight:700;line-height:12px;letter-spacing:-0.437px;">Layers</span>
<span id="t28" class="t " style="left:507.6px;top:263.70px;font-size:6.8px;color:#a8a8a8;font-weight:700;line-height:12px;letter-spacing:-0.399px;">Channels</span>
<span id="t29" class="t mb" style="left:487.4px;top:281.60px;font-size:6.6px;color:#e6e6e6;font-weight:400;line-height:12px;letter-spacing:-0.001px;">Kind</span>
<span id="t30" class="t mb" style="left:479.4px;top:297.40px;font-size:6.6px;color:#e6e6e6;font-weight:400;line-height:12px;letter-spacing:-0.008px;">Normal</span>
<span id="t31" class="t " style="left:475.9px;top:312.30px;font-size:6.6px;color:#c0c0c0;font-weight:400;line-height:12px;letter-spacing:-0.193px;">Lock:</span>
<span id="t32" class="t " style="left:532.3px;top:333.80px;font-size:6.6px;color:#f0f0f0;font-weight:400;line-height:12px;letter-spacing:-1.022px;">La</span>
<span id="t33" class="t " style="left:536.5px;top:387.00px;font-size:7px;color:#b0b0b0;font-weight:700;line-height:12px;letter-spacing:0.133px;">fx</span>
<span id="t34" class="t m" style="left:560.75px;top:-2.00px;font-size:7.4px;color:#1c1c1c;font-weight:400;line-height:12px;letter-spacing:-0.283px;">Copy CSS</span>
<span id="t35" class="t m" style="left:560.75px;top:11.10px;font-size:7.4px;color:#1c1c1c;font-weight:400;line-height:12px;letter-spacing:-0.240px;">Copy SVG</span>
<span id="t36" class="t m" style="left:560.75px;top:24.00px;font-size:7.4px;color:#1c1c1c;font-weight:400;line-height:12px;letter-spacing:-0.020px;">Duplicate Layer...</span>
<span id="t37" class="t m" style="left:560.75px;top:36.50px;font-size:7.4px;color:#7a7a7a;font-weight:400;line-height:12px;letter-spacing:-0.055px;">Delete Layer</span>
<span id="t38" class="t m" style="left:560.75px;top:49.00px;font-size:7.4px;color:#1c1c1c;font-weight:400;line-height:12px;letter-spacing:0.011px;">Group from Layers...</span>
<span id="t39" class="t m" style="left:560.75px;top:66.25px;font-size:7.4px;color:#1c1c1c;font-weight:400;line-height:12px;letter-spacing:0.014px;">Quick Export as PNG</span>
<span id="t40" class="t m" style="left:560.75px;top:78.75px;font-size:7.4px;color:#1c1c1c;font-weight:400;line-height:12px;letter-spacing:-0.046px;">Export As...</span>
<span id="t41" class="t m" style="left:560.75px;top:96.50px;font-size:7.4px;color:#1c1c1c;font-weight:400;line-height:12px;letter-spacing:0.105px;">Artboard from Layers...</span>
<span id="t42" class="t m" style="left:560.75px;top:112.50px;font-size:7.4px;color:#1c1c1c;font-weight:400;line-height:12px;letter-spacing:0.086px;">Convert to Smart Object</span>
<span id="t43" class="t m" style="left:560.75px;top:129.00px;font-size:7.4px;color:#7a7a7a;font-weight:400;line-height:12px;letter-spacing:-0.084px;">Rasterize Layer</span>
<span id="t44" class="t m" style="left:560.75px;top:141.50px;font-size:7.4px;color:#7a7a7a;font-weight:400;line-height:12px;letter-spacing:-0.071px;">Rasterize Layer Style</span>
<span id="t45" class="t m" style="left:560.75px;top:158.25px;font-size:7.4px;color:#1c1c1c;font-weight:400;line-height:12px;letter-spacing:0.061px;">Disable Layer Mask</span>
<span id="t46" class="t m" style="left:560.75px;top:171.25px;font-size:7.4px;color:#7a7a7a;font-weight:400;line-height:12px;letter-spacing:0.125px;">Disable Vector Mask</span>
<span id="t47" class="t m" style="left:560.75px;top:183.75px;font-size:7.4px;color:#7a7a7a;font-weight:400;line-height:12px;letter-spacing:0.117px;">Create Clipping Mask</span>
<span id="t48" class="t m" style="left:560.75px;top:200.75px;font-size:7.4px;color:#7a7a7a;font-weight:400;line-height:12px;letter-spacing:-0.095px;">Link Layers</span>
<span id="t49" class="t m" style="left:560.75px;top:213.25px;font-size:7.4px;color:#7a7a7a;font-weight:400;line-height:12px;letter-spacing:-0.068px;">Select Linked Layers</span>
<span id="t50" class="t m" style="left:560.75px;top:230.25px;font-size:7.4px;color:#7a7a7a;font-weight:400;line-height:12px;letter-spacing:-0.049px;">Copy Layer Style</span>
<span id="t51" class="t m" style="left:560.75px;top:242.75px;font-size:7.4px;color:#7a7a7a;font-weight:400;line-height:12px;letter-spacing:-0.143px;">Paste Layer Style</span>
<span id="t52" class="t m" style="left:560.75px;top:255.25px;font-size:7.4px;color:#7a7a7a;font-weight:400;line-height:12px;letter-spacing:-0.070px;">Clear Layer Style</span>
<span id="t53" class="t m" style="left:560.75px;top:272.00px;font-size:7.4px;color:#7a7a7a;font-weight:400;line-height:12px;letter-spacing:0.057px;">Copy Shape Attributes</span>
<span id="t54" class="t m" style="left:560.75px;top:284.50px;font-size:7.4px;color:#7a7a7a;font-weight:400;line-height:12px;letter-spacing:0.014px;">Paste Shape Attributes</span>
<span id="t55" class="t m" style="left:560.75px;top:301.50px;font-size:7.4px;color:#7a7a7a;font-weight:400;line-height:12px;letter-spacing:0.087px;">Release from Isolation</span>
<span id="t56" class="t m" style="left:560.75px;top:319.00px;font-size:7.4px;color:#7a7a7a;font-weight:400;line-height:12px;letter-spacing:0.055px;">Merge Layers</span>
<span id="t57" class="t m" style="left:560.75px;top:331.30px;font-size:7.4px;color:#7a7a7a;font-weight:400;line-height:12px;letter-spacing:0.155px;">Merge Visible</span>
<span id="t58" class="t m" style="left:560.75px;top:343.50px;font-size:7.4px;color:#1c1c1c;font-weight:400;line-height:12px;letter-spacing:0.004px;">Flatten Image</span>
<span id="t59" class="t m" style="left:560.75px;top:360.70px;font-size:7.4px;color:#1c1c1c;font-weight:400;line-height:12px;letter-spacing:0.260px;">No Color</span>
<span id="t60" class="t m" style="left:560.75px;top:373.10px;font-size:7.4px;color:#1c1c1c;font-weight:400;line-height:12px;letter-spacing:-0.138px;">Red</span>
<span id="t61" class="t m" style="left:560.75px;top:385.90px;font-size:7.4px;color:#1c1c1c;font-weight:400;line-height:12px;letter-spacing:0.099px;">Orange</span>
<span id="t62" class="t m" style="left:560.75px;top:398.70px;font-size:7.4px;color:#1c1c1c;font-weight:400;line-height:12px;letter-spacing:0.026px;">Yellow</span>

</div>
</body></html>
